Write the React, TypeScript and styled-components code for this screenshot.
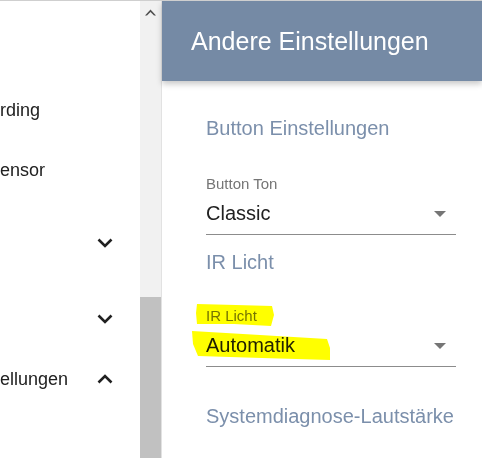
import React from "react";
import styled, { createGlobalStyle } from "styled-components";

const Global = createGlobalStyle`
  html, body {
    margin: 0;
    padding: 0;
    width: 482px;
    height: 458px;
    overflow: hidden;
    background: #ffffff;
    font-family: "Liberation Sans", Arial, sans-serif;
  }
  * { box-sizing: border-box; }
`;

const Frame = styled.div`
  position: relative;
  display: flex;
  width: 482px;
  height: 458px;
  border-top: 1px solid #cfcfcf;
  overflow: hidden;
`;

const Sidebar = styled.nav`
  width: 140px;
  flex-shrink: 0;
  padding-top: 79px;
  overflow: hidden;
  background: #ffffff;
`;

const NavRow = styled.div<{ $h: number }>`
  height: ${(p) => p.$h}px;
  display: flex;
  align-items: center;
  justify-content: space-between;
  padding-right: 27px;
  font-size: 18px;
  line-height: 22px;
  color: #212121;
`;

const NavText = styled.span`
  white-space: nowrap;
`;

const ChevronIcon = styled.svg`
  width: 16px;
  height: 10px;
  flex-shrink: 0;
`;

const ScrollTrack = styled.div`
  width: 22px;
  flex-shrink: 0;
  display: flex;
  flex-direction: column;
  background: #f1f1f1;
  border-right: 1px solid #e2e2e2;
`;

const ScrollButton = styled.div`
  height: 20px;
  display: flex;
  align-items: center;
  justify-content: center;
  padding-top: 3px;
`;

const ScrollThumb = styled.div`
  margin-top: auto;
  height: 161px;
  background: #c1c1c1;
`;

const Main = styled.main`
  flex: 1;
  display: flex;
  flex-direction: column;
  min-width: 0;
`;

const Header = styled.header`
  position: relative;
  z-index: 1;
  height: 80px;
  flex-shrink: 0;
  display: flex;
  align-items: center;
  padding-left: 29px;
  background: #758aa5;
  color: #ffffff;
  font-size: 25px;
  box-shadow: 0 3px 6px rgba(0, 0, 0, 0.22);
`;

const Content = styled.section`
  padding: 0 26px 0 44px;
`;

const SectionTitle = styled.div<{ $mt: number }>`
  margin-top: ${(p) => p.$mt}px;
  font-size: 20px;
  line-height: 24px;
  color: #7b8fab;
  white-space: nowrap;
`;

const Field = styled.div<{ $mt: number }>`
  margin-top: ${(p) => p.$mt}px;
`;

const FieldLabel = styled.div`
  font-size: 15px;
  line-height: 18px;
  color: #757575;
`;

const SelectRow = styled.div`
  margin-top: 8px;
  display: flex;
  align-items: center;
  justify-content: space-between;
  padding-bottom: 9px;
  border-bottom: 1px solid #8c8c8c;
  font-size: 20px;
  line-height: 24px;
  color: #212121;
`;

const Caret = styled.span`
  width: 0;
  height: 0;
  margin-right: 10px;
  margin-top: 2px;
  border-left: 6px solid transparent;
  border-right: 6px solid transparent;
  border-top: 6px solid #757575;
`;

const Highlight = styled.svg`
  position: absolute;
  left: 0;
  top: 0;
  width: 482px;
  height: 458px;
  pointer-events: none;
  mix-blend-mode: multiply;
`;

const Chevron = ({ up }: { up?: boolean }) => (
  <ChevronIcon viewBox="0 0 16 10">
    <polyline
      points={up ? "1.5,8.5 8,2 14.5,8.5" : "1.5,1.5 8,8 14.5,1.5"}
      fill="none"
      stroke="#212121"
      strokeWidth="2.6"
    />
  </ChevronIcon>
);

export default function App() {
  return (
    <>
      <Global />
      <Frame>
        <Sidebar>
          <NavRow $h={60}>
            <NavText>rding</NavText>
          </NavRow>
          <NavRow $h={60}>
            <NavText>ensor</NavText>
          </NavRow>
          <NavRow $h={86}>
            <NavText />
            <Chevron />
          </NavRow>
          <NavRow $h={66}>
            <NavText />
            <Chevron />
          </NavRow>
          <NavRow $h={54}>
            <NavText>ellungen</NavText>
            <Chevron up />
          </NavRow>
        </Sidebar>
        <ScrollTrack>
          <ScrollButton>
            <svg width="11" height="7" viewBox="0 0 11 7">
              <polygon points="0,6.5 5.5,0.5 11,6.5 9,6.5 5.5,3 2,6.5" fill="#505050" />
            </svg>
          </ScrollButton>
          <ScrollThumb />
        </ScrollTrack>
        <Main>
          <Header>Andere Einstellungen</Header>
          <Content>
            <SectionTitle $mt={35}>Button Einstellungen</SectionTitle>
            <Field $mt={35}>
              <FieldLabel>Button Ton</FieldLabel>
              <SelectRow>
                <span>Classic</span>
                <Caret />
              </SelectRow>
            </Field>
            <SectionTitle $mt={15}>IR Licht</SectionTitle>
            <Field $mt={33}>
              <FieldLabel>IR Licht</FieldLabel>
              <SelectRow>
                <span>Automatik</span>
                <Caret />
              </SelectRow>
            </Field>
            <SectionTitle $mt={37}>Systemdiagnose-Lautstärke</SectionTitle>
          </Content>
        </Main>
        <Highlight viewBox="0 0 482 458">
          <polygon points="197,303 236,304 272,305 274,314 271,325 234,323 197,323 196,312" fill="#ffff00" />
          <polygon points="192,330 260,334 327,338 330,347 330,359 262,357 198,355 193,343" fill="#ffff00" />
        </Highlight>
      </Frame>
    </>
  );
}
